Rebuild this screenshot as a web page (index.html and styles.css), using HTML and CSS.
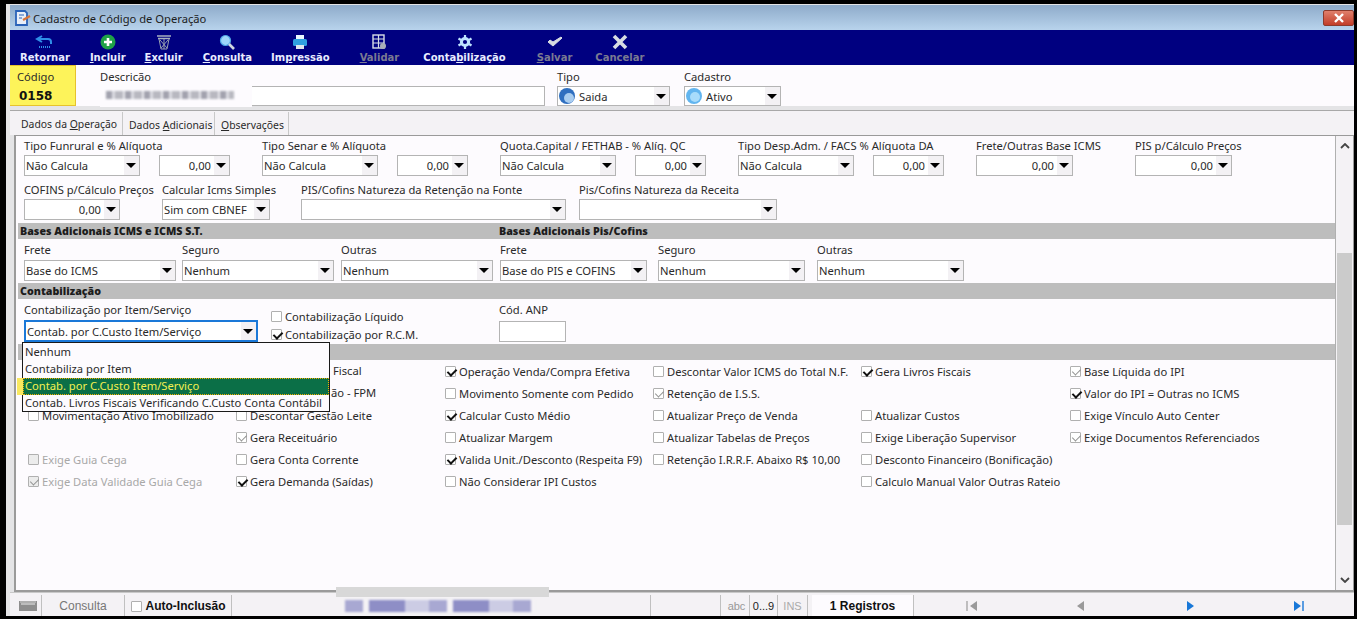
FILE: index.html
```html
<!DOCTYPE html>
<html lang="pt-BR">
<head>
<meta charset="utf-8">
<title>Cadastro de Código de Operação</title>
<link rel="stylesheet" href="styles.css">
</head>
<body>
<div class="window">
  <header class="titlebar">
    <svg class="appicon" viewBox="0 0 18 18" width="18" height="18"><path d="M2 2h9l2 2v12H2z" fill="#e8eef8" stroke="#2a62b8" stroke-width="1.8"/><path d="M5 6h5M5 9h3" stroke="#2a62b8" stroke-width="1.2"/><path d="M9 11l7-4" stroke="#d8743a" stroke-width="2.2"/></svg>
    <span class="title">Cadastro de Código de Operação</span>
    <button class="close" type="button"><svg viewBox="0 0 12 10" width="12" height="10"><path d="M2 1l8 8M10 1l-8 8" stroke="#fff" stroke-width="2.4"/></svg></button>
  </header>

  <nav class="toolbar">
    <div class="tool t-ret"><svg viewBox="0 0 22 16" width="22" height="16"><path d="M8 2L3 5l5 3" fill="none" stroke="#2f8fe8" stroke-width="2"/><path d="M4 5h10a3 3 0 0 1 3 3v2" fill="none" stroke="#2f8fe8" stroke-width="2"/><path d="M5 13h12" stroke="#2f8fe8" stroke-width="2" stroke-dasharray="1 1"/></svg><b>Retornar</b></div>
    <div class="tool t-inc"><svg viewBox="0 0 18 16" width="18" height="16"><circle cx="9" cy="8" r="7.500" fill="#1fa247"/><path d="M9 4v8M5 8h8" stroke="#fff" stroke-width="2.600"/></svg><b><u>I</u>ncluir</b></div>
    <div class="tool t-exc"><svg viewBox="0 0 18 16" width="18" height="16"><path d="M2 2h14M3 4.500h12" stroke="#a8b0c0" stroke-width="1.400"/><path d="M4 5l2 10h6l2-10M5 6l7 8M13 6l-7 8M9 5v10" fill="none" stroke="#98a0b0" stroke-width="1"/></svg><b><u>E</u>xcluir</b></div>
    <div class="tool t-con"><svg viewBox="0 0 18 16" width="18" height="16"><circle cx="7.500" cy="6.500" r="5" fill="#9fd6fa" stroke="#4fa7e6" stroke-width="1.200"/><path d="M11 10l5 5" stroke="#cfd8e0" stroke-width="2.600"/></svg><b><u>C</u>onsulta</b></div>
    <div class="tool t-imp"><svg viewBox="0 0 18 16" width="18" height="16"><path d="M5 1h8v4H5z" fill="#eaf6ff"/><rect x="2" y="5" width="14" height="7" rx="1.500" fill="#2f9fe0"/><path d="M5 11h8v4H5z" fill="#dfe6ee"/></svg><b>Im<u>p</u>ressão</b></div>
    <div class="tool t-val off"><svg viewBox="0 0 18 16" width="18" height="16"><rect x="3" y="1" width="11" height="13" fill="none" stroke="#d8dde6" stroke-width="1.400"/><path d="M3 5h11M3 9h11M8.500 1v13" stroke="#d8dde6" stroke-width="1.200"/><circle cx="13" cy="12" r="3" fill="#a8aeb8"/></svg><b><u>V</u>alidar</b></div>
    <div class="tool t-ctb"><svg viewBox="0 0 18 16" width="18" height="16"><circle cx="9" cy="8" r="3.600" fill="none" stroke="#bfe4ff" stroke-width="3"/><path d="M9 1v3M9 12v3M2.500 4.500l2.500 1.500M13 10l2.500 1.500M15.500 4.500L13 6M5 10l-2.500 1.500" stroke="#bfe4ff" stroke-width="2.200"/></svg><b>Conta<u>b</u>ilização</b></div>
    <div class="tool t-sal off"><svg viewBox="0 0 18 16" width="18" height="16"><path d="M2 8l5 4 9-8-1-1-8 5-3-2z" fill="#d8dce2" stroke="#d8dce2" stroke-width="1"/></svg><b><u>S</u>alvar</b></div>
    <div class="tool t-can off"><svg viewBox="0 0 18 16" width="18" height="16"><path d="M3 2l12 12M15 2L3 14" stroke="#d8dce2" stroke-width="3.600"/></svg><b>Cancelar</b></div>
  </nav>

  <section class="head">
    <div class="code"><span>Código</span><b>0158</b></div>
    <div class="hf hf-desc"><label>Descrição</label>
      <div class="input desc-input"><span class="blur blur-desc"></span></div>
      <span class="desc-mask"></span>
    </div>
    <div class="hf hf-tipo"><label>Tipo</label>
      <div class="combo"><svg class="ball" viewBox="0 0 16 16" width="16" height="16"><circle cx="8" cy="8" r="8" fill="#2f6fc0"/><circle cx="10" cy="10" r="5" fill="#a9cdf0"/></svg><span>Saida</span><i></i></div>
    </div>
    <div class="hf hf-cad"><label>Cadastro</label>
      <div class="combo"><svg class="ball" viewBox="0 0 16 16" width="16" height="16"><circle cx="8" cy="8" r="8" fill="#62b5ef"/><circle cx="9" cy="9" r="5" fill="#a8dcfb"/></svg><span>Ativo</span><i></i></div>
    </div>
  </section>

  <div class="tabs">
    <div class="tab active">Dados da <u>O</u>peração</div>
    <div class="tab tab2">Dados <u>A</u>dicionais</div>
    <div class="tab tab3"><u>O</u>bservações</div>
  </div>

  <main class="panel">
    <div class="content">
      <div class="row row1">
        <div class="group g1"><label>Tipo Funrural e % Alíquota</label><div class="ctrls"><div class="combo w116"><span>Não Calcula</span><i></i></div><div class="combo num w71"><span>0,00</span><i></i></div></div></div>
        <div class="group g2"><label>Tipo Senar e % Alíquota</label><div class="ctrls"><div class="combo w116"><span>Não Calcula</span><i></i></div><div class="combo num w71"><span>0,00</span><i></i></div></div></div>
        <div class="group g3"><label>Quota.Capital / FETHAB - % Alíq. QC</label><div class="ctrls"><div class="combo w116"><span>Não Calcula</span><i></i></div><div class="combo num w71"><span>0,00</span><i></i></div></div></div>
        <div class="group g4"><label>Tipo Desp.Adm. / FACS % Alíquota DA</label><div class="ctrls"><div class="combo w116"><span>Não Calcula</span><i></i></div><div class="combo num w71"><span>0,00</span><i></i></div></div></div>
        <div class="group g5"><label>Frete/Outras Base ICMS</label><div class="combo num w97"><span>0,00</span><i></i></div></div>
        <div class="group g6"><label>PIS p/Cálculo Preços</label><div class="combo num w97"><span>0,00</span><i></i></div></div>
      </div>
      <div class="row">
        <div class="group h1"><label>COFINS p/Cálculo Preços</label><div class="combo num w96"><span>0,00</span><i></i></div></div>
        <div class="group h2"><label>Calcular Icms Simples</label><div class="combo w108"><span>Sim com CBNEF</span><i></i></div></div>
        <div class="group h3"><label>PIS/Cofins Natureza da Retenção na Fonte</label><div class="combo w265"><span></span><i></i></div></div>
        <div class="group h4"><label>Pis/Cofins Natureza da Receita</label><div class="combo w198"><span></span><i></i></div></div>
      </div>

      <div class="bar"><b class="bar-a">Bases Adicionais ICMS e ICMS S.T.</b><b>Bases Adicionais Pis/Cofins</b></div>

      <div class="row row3">
        <div class="group"><label>Frete</label><div class="combo w152"><span>Base do ICMS</span><i></i></div></div>
        <div class="group"><label>Seguro</label><div class="combo w152"><span>Nenhum</span><i></i></div></div>
        <div class="group"><label>Outras</label><div class="combo w152"><span>Nenhum</span><i></i></div></div>
        <div class="group"><label>Frete</label><div class="combo w147"><span>Base do PIS e COFINS</span><i></i></div></div>
        <div class="group j5"><label>Seguro</label><div class="combo w147"><span>Nenhum</span><i></i></div></div>
        <div class="group j6"><label>Outras</label><div class="combo w147"><span>Nenhum</span><i></i></div></div>
      </div>

      <div class="bar"><b>Contabilização</b></div>

      <div class="row row4">
        <div class="group k1"><label>Contabilização por Item/Serviço</label><div class="combo w234 focus"><span>Contab. por C.Custo Item/Serviço</span><i></i></div>
          <ul class="dropdown">
            <li>Nenhum</li>
            <li>Contabiliza por Item</li>
            <li class="sel">Contab. por C.Custo Item/Serviço</li>
            <li>Contab. Livros Fiscais Verificando C.Custo Conta Contábil</li>
          </ul>
        </div>
        <div class="k2">
          <div class="ck"><i class="box"></i>Contabilização Líquido</div>
          <div class="ck"><i class="box on"></i>Contabilização por R.C.M.</div>
        </div>
        <div class="group k3"><label>Cód. ANP</label><div class="input w67"></div></div>
      </div>

      <div class="bar bar3"></div>

      <div class="checks">
        <div class="cell"></div>
        <div class="cell"><span class="cut1">Fiscal</span></div>
        <div class="ck"><i class="box on"></i>Operação Venda/Compra Efetiva</div>
        <div class="ck"><i class="box"></i>Descontar Valor ICMS do Total N.F.</div>
        <div class="ck"><i class="box on"></i>Gera Livros Fiscais</div>
        <div class="ck half"><i class="box on"></i>Base Líquida do IPI</div>

        <div class="cell"></div>
        <div class="cell"><span class="cut2">ão - FPM</span></div>
        <div class="ck"><i class="box"></i>Movimento Somente com Pedido</div>
        <div class="ck half"><i class="box on"></i>Retenção de I.S.S.</div>
        <div class="cell"></div>
        <div class="ck"><i class="box on"></i>Valor do IPI = Outras no ICMS</div>

        <div class="ck"><i class="box"></i>Movimentação Ativo Imobilizado</div>
        <div class="ck"><i class="box"></i>Descontar Gestão Leite</div>
        <div class="ck"><i class="box on"></i>Calcular Custo Médio</div>
        <div class="ck"><i class="box"></i>Atualizar Preço de Venda</div>
        <div class="ck"><i class="box"></i>Atualizar Custos</div>
        <div class="ck"><i class="box"></i>Exige Vínculo Auto Center</div>

        <div class="cell"></div>
        <div class="ck half"><i class="box on"></i>Gera Receituário</div>
        <div class="ck"><i class="box"></i>Atualizar Margem</div>
        <div class="ck"><i class="box"></i>Atualizar Tabelas de Preços</div>
        <div class="ck"><i class="box"></i>Exige Liberação Supervisor</div>
        <div class="ck half"><i class="box on"></i>Exige Documentos Referenciados</div>

        <div class="ck dis"><i class="box"></i>Exige Guia Cega</div>
        <div class="ck"><i class="box"></i>Gera Conta Corrente</div>
        <div class="ck"><i class="box on"></i>Valida Unit./Desconto (Respeita F9)</div>
        <div class="ck"><i class="box"></i>Retenção I.R.R.F. Abaixo R$ 10,00</div>
        <div class="ck"><i class="box"></i>Desconto Financeiro (Bonificação)</div>
        <div class="cell"></div>

        <div class="ck dis"><i class="box on"></i>Exige Data Validade Guia Cega</div>
        <div class="ck"><i class="box on"></i>Gera Demanda (Saídas)</div>
        <div class="ck"><i class="box"></i>Não Considerar IPI Custos</div>
        <div class="cell"></div>
        <div class="ck"><i class="box"></i>Calculo Manual Valor Outras Rateio</div>
        <div class="cell"></div>
      </div>
    </div>
    <aside class="scroll">
      <svg viewBox="0 0 10 6" width="10" height="6"><path d="M1 5l4-4 4 4" fill="none" stroke="#444" stroke-width="1.800"/></svg>
      <div class="track"><div class="thumb"></div></div>
      <svg viewBox="0 0 10 6" width="10" height="6"><path d="M1 1l4 4 4-4" fill="none" stroke="#444" stroke-width="1.800"/></svg>
    </aside>
  </main>

  <footer class="status">
    <div class="st st-ico"><svg viewBox="0 0 18 10" width="18" height="10"><rect width="18" height="10" fill="#8e8e8e"/><path d="M1 1h16" stroke="#d0d0d0"/><rect x="2" y="2" width="14" height="2" fill="#bdbdbd"/></svg></div>
    <div class="st st-con">Consulta</div>
    <div class="st st-auto"><i class="box"></i><b>Auto-Inclusão</b></div>
    <div class="st st-msg"><span class="blur blur-status"></span><span class="status-mask"></span></div>
    <div class="st st-gap"></div>
    <div class="st st-abc">abc</div>
    <div class="st st-09">0...9</div>
    <div class="st st-ins">INS</div>
    <div class="st st-reg"><b>1 Registros</b></div>
    <div class="st st-nav">
      <svg viewBox="0 0 12 10" width="12" height="10"><path d="M1 0v10" stroke="#9a9a9a" stroke-width="1.200"/><path d="M11 0v10L4 5z" fill="#9a9a9a"/></svg>
      <svg viewBox="0 0 12 10" width="12" height="10"><path d="M9 0v10L2 5z" fill="#9a9a9a"/></svg>
      <svg viewBox="0 0 12 10" width="12" height="10"><path d="M3 0v10l7-5z" fill="#1878d8"/></svg>
      <svg viewBox="0 0 12 10" width="12" height="10"><path d="M1 0v10l7-5z" fill="#1878d8"/><path d="M10 0v10" stroke="#1878d8" stroke-width="1.400"/></svg>
    </div>
  </footer>
</div>
</body>
</html>
```
FILE: styles.css
```css
* { box-sizing: border-box; }
html, body { margin: 0; height: 100%; }
body {
  background: #fff;
  font: 11.2px/15px "Noto Sans", "Open Sans", sans-serif;
  color: #2a2a2a;
  overflow: hidden;
}
.window {
  width: 1357px;
  height: 619px;
  background: #e4e4e6;
  border: solid #000;
  border-width: 4px 3px 3px 6px;
  display: flex;
  flex-direction: column;
  padding: 1px 0 0 4px;
}

/* title bar */
.titlebar {
  height: 25px;
  flex: none;
  display: flex;
  align-items: center;
  padding: 0 0 0 4px;
  background: linear-gradient(#8eabca, #b8d3ec);
  gap: 1px;
}
.title { flex: 1; font-size: 11.2px; color: #1c1c1c; padding-top: 2px; }
.close {
  width: 31px; height: 16px; padding: 0; border: 1px solid #8c3a2c; border-radius: 2px;
  background: linear-gradient(#e0806c, #c23c28);
  display: flex; align-items: center; justify-content: center;
}

/* toolbar */
.toolbar {
  height: 35px; flex: none;
  background: #000080;
  display: flex;
  padding-left: 10px;
}
.tool { display: flex; flex-direction: column; align-items: center; color: #e8ecff; height: 35px; padding-top: 4px; }
.tool svg { flex: none; }
.tool b { font: bold 10px/15px "DejaVu Sans", sans-serif; white-space: nowrap; }
.tool.off { color: #7a7a92; }
.t-inc { margin-left: 20px; } .t-exc { margin-left: 19px; } .t-con { margin-left: 20px; }
.t-imp { margin-left: 19px; } .t-val { margin-left: 30px; } .t-ctb { margin-left: 24px; }
.t-sal { margin-left: 31px; } .t-can { margin-left: 23px; }

/* header fields */
.head { height: 41px; flex: none; display: flex; background: #fdfbfe; position: relative; }
.code {
  width: 66px; height: 41px;
  background: #fdf35a; border: 1px solid #e6c22c; border-width: 1px 1px 1px 0;
  padding: 3px 0 0 7px;
  display: flex; flex-direction: column;
}
.code span { line-height: 16px; }
.code b { font: bold 12px/18px "DejaVu Sans", sans-serif; margin: 2px 0 0 2px; color: #111; }
.hf { display: flex; flex-direction: column; position: relative; padding-top: 4px; }
.hf label { line-height: 16px; height: 18px; }
.hf-desc { margin-left: 24px; width: 445px; }
.hf-tipo { margin-left: 12px; width: 113px; }
.hf-cad { margin-left: 14px; width: 97px; }
.head .combo, .head .input { height: 21px; }
.desc-mask { position: absolute; left: 0; top: 16px; width: 152px; height: 26px; background: #fdfbfe; }

.input { background: #fff; border: 1px solid #b4b4b4; height: 21px; }
.blur { display: block; filter: blur(1px); }
.desc-input { padding: 4px 0 0 5px; }
.blur-desc {
  position: relative; z-index: 2;
  width: 128px; height: 8px;
  background: repeating-linear-gradient(90deg, #a2a2ae 0 6px, #dcdce2 6px 9px, #b8b8c0 9px 17px, #ececf0 17px 19px);
}

/* tabs */
.tabs {
  height: 25px; flex: none; margin-top: 4px;
  background: #f4f2f5;
  border-top: 1px solid #a8a8a8;
  display: flex;
  padding: 1px 0 0 4px;
}
.tab { padding: 6px 0 0 6px; height: 23px; border-right: 1px solid #c8c8c8; font-size: 10.4px; white-space: nowrap; }
.tab.active { padding: 5px 0 0 7px; width: 109px; }
.tab2 { width: 92px; }
.tab3 { width: 74px; }

/* panel */
.panel {
  flex: 1; min-height: 0;
  margin-left: 4px;
  display: flex;
  border: solid #9a9a9a; border-width: 1px 1px 2px 2px;
  background: #fdfbfe;
}
.content { flex: 1; min-width: 0; padding-left: 2px; }
.row { display: flex; height: 44px; padding-left: 6px; }
.row1 { margin-top: -1px; }
.group { display: flex; flex-direction: column; position: relative; flex: none; }
.group label { height: 20px; line-height: 21px; white-space: nowrap; display: block; }
.ctrls { display: flex; justify-content: space-between; }
.g1, .g2, .g3, .g4 { width: 206px; }
.g2 { margin-left: 32px; } .g3 { margin-left: 32px; } .g4 { margin-left: 32px; }
.g5 { margin-left: 32px; width: 97px; } .g6 { margin-left: 62px; width: 97px; }
.h1 { width: 96px; }
.h2 { margin-left: 42px; width: 108px; } .h3 { margin-left: 31px; width: 265px; } .h4 { margin-left: 13px; width: 198px; }

.combo {
  display: flex; align-items: center;
  height: 21px;
  background: #fff;
  border: 1px solid #b4b4b4;
  padding-left: 1px;
  white-space: nowrap;
  overflow: hidden;
}
.combo span { flex: 1; min-width: 0; }
.combo i {
  flex: none; width: 15px; height: 100%;
  background: #f3f1f4;
  position: relative;
}
.combo i::after {
  content: ""; position: absolute; left: 2px; top: 7px;
  border: 5px solid transparent; border-top: 5px solid #000; border-bottom: 0;
}
.num span { text-align: right; padding-right: 3px; }
.ball { flex: none; margin-right: 4px; }
.w116 { width: 116px; } .w71 { width: 71px; } .w97 { width: 97px; } .w96 { width: 96px; }
.w108 { width: 108px; } .w265 { width: 265px; } .w198 { width: 198px; } .w152 { width: 152px; }
.w147 { width: 147px; } .w234 { width: 234px; } .w67 { width: 67px; }

.bar {
  height: 16px; background: #bdbdbd;
  padding-left: 2px; display: flex;
  font: bold 10.7px/16px "Noto Sans", sans-serif; color: #1c1c1c;
}
.bar-a { width: 479px; }

.row3 { gap: 6px; }
.row3 label { height: 21px; }
.row3 .group:nth-child(3), .row3 .group:nth-child(4) { margin-left: 1px; }
.row3 .j5 { margin-left: 5px; } .row3 .j6 { margin-left: 6px; }
.row4 { height: 45px; }
.row4 label { height: 21px; line-height: 22px; }
.k1 { width: 234px; }
.k1 .combo { height: 22px; }
.focus { border: 2px solid #1a78d8; }
.k2 { margin-left: 13px; padding-top: 8px; width: 200px; flex: none; }
.k2 .ck { height: 18px; }
.k3 { margin-left: 28px; }
.k3 label { height: 22px; }

/* dropdown */
.dropdown {
  position: absolute; left: -2px; top: 43px; z-index: 5;
  width: 308px; height: 70px; margin: 0; padding: 1px 0 0;
  list-style: none;
  background: #fdfbfe;
  border: 1px solid #1a1a1a;
}
.dropdown li { height: 17px; line-height: 16px; padding-left: 2px; white-space: nowrap; }
.dropdown .sel {
  background: #0b6f47; color: #f5ef50;
  outline: 1px dotted #f0b000; outline-offset: -1px;
  box-shadow: -6px 0 0 #f8e860;
}

/* check grid */
.checks {
  display: grid;
  grid-template-columns: 208px 209px 208px 208px 209px 1fr;
  grid-auto-rows: 22px;
  padding-left: 10px;
}
.ck { display: flex; align-items: center; white-space: nowrap; height: 22px; }
.cell { height: 22px; line-height: 22px; white-space: nowrap; }
.cut1 { margin-left: 97px; }
.cut2 { margin-left: 95px; }
.box {
  flex: none; width: 11px; height: 11px; margin: 0 3px 0 0;
  background: #fff; border: 1px solid #b0b0b0; border-radius: 1px;
  position: relative; display: inline-block;
}
.box.on::after {
  content: ""; position: absolute; left: 3px; top: 0;
  width: 4px; height: 7px;
  border: solid #111; border-width: 0 2px 2px 0; transform: rotate(45deg);
}
.dis { color: #a8a8a8; }
.dis .box { background: #ececec; }
.dis .box.on::after, .half .box.on::after { border-color: #909090; border-width: 0 1px 1px 0; }

/* scrollbar */
.scroll {
  width: 18px; flex: none;
  background: #f4f2f5;
  border-left: 1px solid #b0b0b0;
  display: flex; flex-direction: column; align-items: center;
  padding: 7px 0;
}
.track { flex: 1; width: 100%; padding: 104px 1px 52px; }
.thumb { height: 100%; background: #cbcbcb; }

/* status */
.status {
  height: 24px; flex: none;
  display: flex; align-items: stretch;
  background: #f4f2f5;
  border-top: 1px solid #c8c8c8;
  padding-left: 5px;
  font: 12px/20px "Liberation Sans", sans-serif;
}
.st { display: flex; align-items: center; justify-content: center; border-right: 1px solid #c0c0c0; margin-top: 2px; padding-top: 1px; white-space: nowrap; }
.st-ico { width: 27px; }
.st-con { width: 83px; color: #777; }
.st-auto { width: 107px; gap: 4px; color: #111; }
.st-auto .box { margin: 0; }
.st-msg { width: 419px; position: relative; }
.st-gap { width: 70px; }
.st-abc { width: 26px; margin-left: 3px; color: #999; font-size: 11px; }
.st-09 { width: 28px; color: #222; font-size: 11px; }
.st-ins { width: 30px; color: #aaa; font-size: 11px; }
.st-reg { width: 102px; margin-left: 4px; color: #111; background: #fdfbfe; }
.st-nav { flex: 1; border: 0; justify-content: space-between; padding: 0 49px 0 52px; }
.blur-status {
  position: absolute; left: 113px; top: 5px; width: 190px; height: 12px;
  background: repeating-linear-gradient(90deg, #a8a8d2 0 18px, #f4f2f5 18px 24px, #8e8ec6 24px 60px, #ccccE4 60px 84px);
}
.status-mask { position: absolute; left: 104px; top: -8px; width: 213px; height: 10px; background: #d8d8d8; }
```
